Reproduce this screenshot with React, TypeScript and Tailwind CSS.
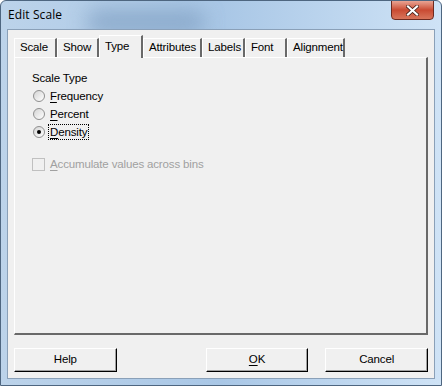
import React from 'react';

const tabs = [
  { label: 'Scale', w: 43 },
  { label: 'Show', w: 42 },
  { label: 'Type', w: 44 },
  { label: 'Attributes', w: 59 },
  { label: 'Labels', w: 43 },
  { label: 'Font', w: 42 },
  { label: 'Alignment', w: 58 },
];

function Radio({ checked, label, focused }: { checked?: boolean; label: string; focused?: boolean }) {
  return (
    <div className="flex items-center h-[18px]">
      <span className="w-[12px] h-[12px] rounded-full border border-[#8f8f8f] bg-gradient-to-br from-[#d4d4d4] to-white flex items-center justify-center">
        {checked && <span className="w-[4px] h-[4px] rounded-full bg-black" />}
      </span>
      <span className={`ml-[4px] px-[1px] leading-[14px] ${focused ? 'outline outline-1 outline-dotted outline-black' : ''}`}>
        <span className="underline underline-offset-2">{label[0]}</span>
        {label.slice(1)}
      </span>
    </div>
  );
}

function Button({ children, className = '' }: { children: React.ReactNode; className?: string }) {
  return (
    <div
      className={`w-[103px] h-[24px] flex items-center justify-center bg-[#f0f0f0] border-t border-l border-white border-r border-b border-r-black border-b-black shadow-[inset_-1px_-1px_0_#a0a0a0] ${className}`}
    >
      {children}
    </div>
  );
}

export default function App() {
  return (
    <div
      className="relative w-[442px] h-[386px] flex flex-col bg-gradient-to-r from-[#bcd3ea] via-[#a9c7e6] to-[#cfe3f6] border border-[#4e6680] rounded-t-[6px] overflow-hidden text-[11.5px] tracking-[-0.15px] text-black"
      style={{ fontFamily: '"Liberation Sans", Arial, sans-serif' }}
    >
      {/* glass blur behind the title */}
      <div className="absolute left-[85px] top-[8px] w-[120px] h-[26px] rounded-full bg-[#7f9fc2] opacity-70 blur-[10px]" />

      {/* title bar */}
      <div className="relative h-[28px] flex items-center px-[7px]">
        <span className="text-[12px] tracking-[0.1px]" style={{ fontFamily: '"Open Sans", "Noto Sans", sans-serif' }}>
          Edit Scale
        </span>
        <div className="absolute right-[7px] top-[-1px] w-[43px] h-[20px] rounded-b-[4px] border border-[#6d2a20] bg-gradient-to-b from-[#e8a493] via-[#c94a32] to-[#d8755b] flex items-center justify-center">
          <svg width="13" height="11" viewBox="0 0 13 11">
            <path d="M2 1.5 L11 9.5 M11 1.5 L2 9.5" stroke="#3b1a14" strokeWidth="3.6" strokeLinecap="square" />
            <path d="M2 1.5 L11 9.5 M11 1.5 L2 9.5" stroke="white" strokeWidth="2.2" strokeLinecap="square" />
          </svg>
        </div>
      </div>

      {/* client area */}
      <div className="relative flex-1 mx-[6px] mb-[6px] bg-[#f0f0f0] border border-[#8aa0b8] flex flex-col px-[6px]">
        {/* tab strip */}
        <div className="flex items-end h-[27px]">
          {tabs.map((t) => {
            const sel = t.label === 'Type';
            return (
              <div
                key={t.label}
                style={{ width: t.w }}
                className={
                  sel
                    ? 'relative z-10 h-[23px] -mb-[1px] bg-[#f0f0f0] border-t border-l border-white border-r-2 border-r-[#696969] flex items-start pt-[2px] pl-[5px]'
                    : 'h-[19px] border-t border-l border-white border-r-2 border-r-[#696969] flex items-center pl-[5px]'
                }
              >
                {t.label}
              </div>
            );
          })}
        </div>

        {/* tab panel */}
        <div className="h-[278px] border-t border-l border-white border-r-2 border-b-2 border-r-[#696969] border-b-[#696969] pl-[17px] pt-[12px]">
          <div className="leading-[16px]">Scale Type</div>
          <div className="mt-[1px] pl-[1px]">
            <Radio label="Frequency" />
            <Radio label="Percent" />
            <Radio label="Density" checked focused />
          </div>
          <div className="mt-[15px] flex items-center text-[#a0a0a0]">
            <span className="w-[13px] h-[13px] border border-[#c0c0c0] bg-[#f0f0f0]" />
            <span className="ml-[5px]">
              <span className="underline underline-offset-2">A</span>ccumulate values across bins
            </span>
          </div>
        </div>

        {/* buttons */}
        <div className="flex items-center mt-[13px]">
          <Button>Help</Button>
          <Button className="ml-[89px]">
            <span>
              <span className="underline underline-offset-2">O</span>K
            </span>
          </Button>
          <Button className="ml-[17px]">Cancel</Button>
        </div>
      </div>
    </div>
  );
}
